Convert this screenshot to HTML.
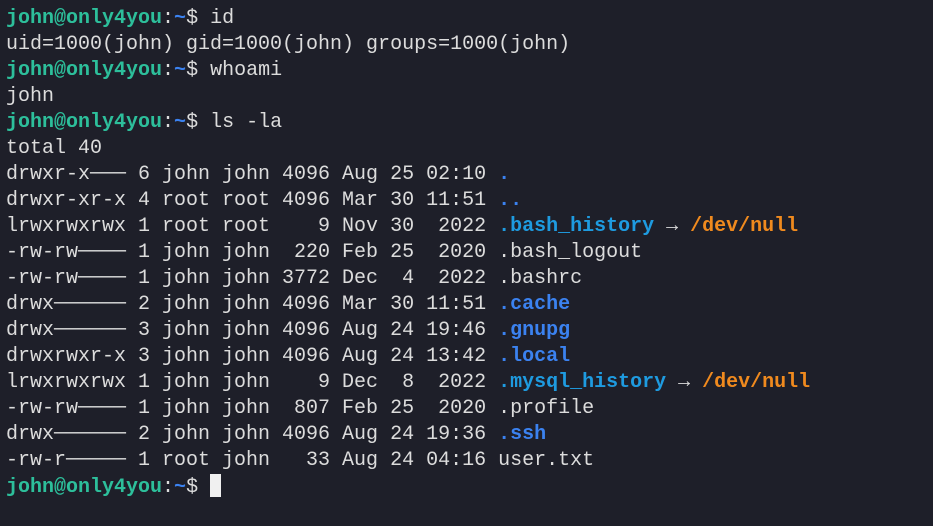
<!DOCTYPE html>
<html><head><meta charset="utf-8"><style>
html,body{margin:0;padding:0;width:933px;height:526px;overflow:hidden;background:#1e1f29;}
pre{position:absolute;left:6px;top:6px;margin:0;font-family:"Liberation Mono","DejaVu Sans Mono",monospace;font-size:20px;line-height:26px;color:#dcdcdc;}
.g{color:#2dbf9b;font-weight:bold}
.b{color:#3b82f0;font-weight:bold}
.c{color:#1e9be0;font-weight:bold}
.o{color:#f08a1e;font-weight:bold}
.cur{display:inline-block;width:11px;height:23px;background:#f0f0f0;vertical-align:-5px;}
</style></head><body>
<pre><span class="g">john@only4you</span>:<span class="b">~</span>$ id
uid=1000(john) gid=1000(john) groups=1000(john)
<span class="g">john@only4you</span>:<span class="b">~</span>$ whoami
john
<span class="g">john@only4you</span>:<span class="b">~</span>$ ls -la
total 40
drwxr-x─── 6 john john 4096 Aug 25 02:10 <span class="b">.</span>
drwxr-xr-x 4 root root 4096 Mar 30 11:51 <span class="b">..</span>
lrwxrwxrwx 1 root root    9 Nov 30  2022 <span class="c">.bash_history</span> → <span class="o">/dev/null</span>
-rw-rw──── 1 john john  220 Feb 25  2020 .bash_logout
-rw-rw──── 1 john john 3772 Dec  4  2022 .bashrc
drwx────── 2 john john 4096 Mar 30 11:51 <span class="b">.cache</span>
drwx────── 3 john john 4096 Aug 24 19:46 <span class="b">.gnupg</span>
drwxrwxr-x 3 john john 4096 Aug 24 13:42 <span class="b">.local</span>
lrwxrwxrwx 1 john john    9 Dec  8  2022 <span class="c">.mysql_history</span> → <span class="o">/dev/null</span>
-rw-rw──── 1 john john  807 Feb 25  2020 .profile
drwx────── 2 john john 4096 Aug 24 19:36 <span class="b">.ssh</span>
-rw-r───── 1 root john   33 Aug 24 04:16 user.txt
<span class="g">john@only4you</span>:<span class="b">~</span>$ <span class="cur"></span></pre>
</body></html>
